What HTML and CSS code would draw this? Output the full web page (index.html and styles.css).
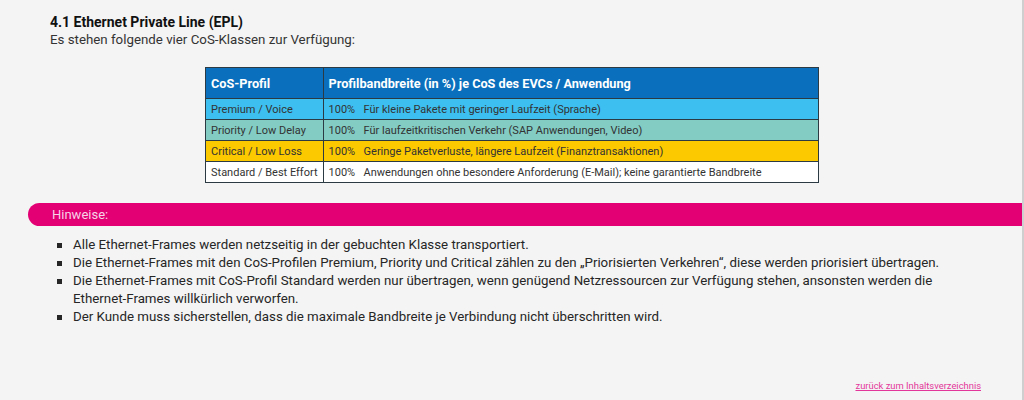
FILE: index.html
```html
<!DOCTYPE html>
<html lang="de">
<head>
<meta charset="utf-8">
<title>4.1 Ethernet Private Line (EPL)</title>
<link rel="stylesheet" href="styles.css">
</head>
<body>
<div class="page">
  <section class="intro">
    <h2 class="title">4.1 Ethernet Private Line (EPL)</h2>
    <p class="lead">Es stehen folgende vier CoS-Klassen zur Verfügung:</p>
    <table class="cos">
      <thead>
        <tr><th class="c1">CoS-Profil</th><th>Profilbandbreite (in %) je CoS des EVCs / Anwendung</th></tr>
      </thead>
      <tbody>
        <tr class="premium"><td class="c1">Premium / Voice</td><td><span class="pct">100%</span>Für kleine Pakete mit geringer Laufzeit (Sprache)</td></tr>
        <tr class="priority"><td class="c1">Priority / Low Delay</td><td><span class="pct">100%</span>Für laufzeitkritischen Verkehr (SAP Anwendungen, Video)</td></tr>
        <tr class="critical"><td class="c1">Critical / Low Loss</td><td><span class="pct">100%</span>Geringe Paketverluste, längere Laufzeit (Finanztransaktionen)</td></tr>
        <tr class="standard"><td class="c1">Standard / Best Effort</td><td><span class="pct">100%</span>Anwendungen ohne besondere Anforderung (E-Mail); keine garantierte Bandbreite</td></tr>
      </tbody>
    </table>
  </section>
  <div class="hint-bar">Hinweise:</div>
  <ul class="notes">
    <li>Alle Ethernet-Frames werden netzseitig in der gebuchten Klasse transportiert.</li>
    <li>Die Ethernet-Frames mit den CoS-Profilen Premium, Priority und Critical zählen zu den „Priorisierten Verkehren“, diese werden priorisiert übertragen.</li>
    <li>Die Ethernet-Frames mit CoS-Profil Standard werden nur übertragen, wenn genügend Netzressourcen zur Verfügung stehen, ansonsten werden die Ethernet-Frames willkürlich verworfen.</li>
    <li>Der Kunde muss sicherstellen, dass die maximale Bandbreite je Verbindung nicht überschritten wird.</li>
  </ul>
  <div class="footer"><a class="toc" href="#">zurück zum Inhaltsverzeichnis</a></div>
</div>
</body>
</html>
```

FILE: styles.css
```css
html, body {
  margin: 0;
  padding: 0;
  background: #f4f4f4;
}
body {
  font-family: Roboto, "Noto Sans", Arial, sans-serif;
  color: #262626;
}
.page {
  box-sizing: border-box;
  width: 1024px;
  height: 400px;
  border-right: 2px solid #cfcfcf;
  display: flex;
  flex-direction: column;
  overflow: hidden;
}
.intro {
  padding: 13px 0 0 50px;
}
.title {
  margin: 0;
  font-size: 14px;
  font-weight: 700;
  line-height: 18px;
  color: #111;
}
.lead {
  margin: 0;
  font-size: 13.3px;
  line-height: 18px;
  color: #333;
}
.cos {
  margin: 18px 0 0 155px;
  width: 614px;
  border-collapse: collapse;
  font-size: 11px;
  color: #333;
}
.cos th, .cos td {
  border: 1px solid #2c3a44;
  padding: 0 5px;
  text-align: left;
  white-space: nowrap;
}
.cos th {
  background: #0a70bd;
  color: #fff;
  font-size: 12.7px;
  font-weight: 700;
  height: 30px;
}
.cos td {
  height: 20px;
}
.cos .c1 {
  width: 104px;
}
.pct {
  display: inline-block;
  width: 35px;
}
.premium td { background: #3dbfef; }
.priority td { background: #82ccc4; }
.critical td { background: #fcc800; }
.standard td { background: #ffffff; }
.hint-bar {
  margin: 20px 0 0 28px;
  height: 23px;
  line-height: 23px;
  background: #e20074;
  color: #f7d2e6;
  border-radius: 12px 0 0 12px;
  padding-left: 24px;
  font-size: 13px;
}
.notes {
  margin: 10px 0 0 0;
  padding: 0 0 0 73px;
  width: 880px;
  list-style: none;
  font-size: 13.3px;
  line-height: 18px;
  color: #262626;
}
.notes li {
  position: relative;
}
.notes li::before {
  content: "";
  position: absolute;
  left: -16px;
  top: 7px;
  width: 5px;
  height: 5px;
  background: #262626;
}
.footer {
  margin-top: auto;
  padding: 0 41px 9px 0;
  display: flex;
  justify-content: flex-end;
}
.toc {
  color: #e3369a;
  font-size: 9.4px;
  text-decoration: underline;
}
```
